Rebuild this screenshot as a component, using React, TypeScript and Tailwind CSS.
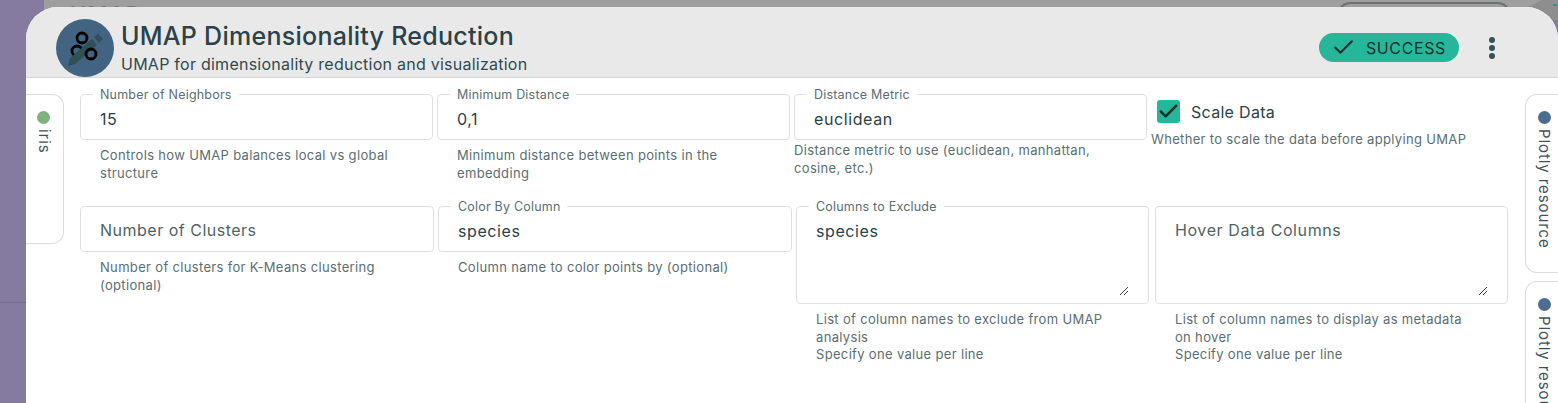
import { Check } from "lucide-react";

const font = "font-['Inter','Noto_Sans',sans-serif]";
const labelClass = "absolute left-[12px] top-[-8px] bg-white px-[7px] text-[12.5px] leading-[15px] tracking-[0.2px] text-[#5b6e72]";

function Field({ label, value, muted, help, className }: { label?: string; value: string; muted?: boolean; help: string; className: string }) {
  return (
    <div className={className}>
      <div className="relative flex h-[46px] items-center rounded-[4px] border border-[#e0e0e0] px-[19px] pt-[4px]">
        {label && <span className={labelClass}>{label}</span>}
        <span className={muted ? "-mt-[2px] text-[16px] tracking-[0.5px] text-[#4f6367]" : "text-[16px] tracking-[0.6px] text-[#2a4248]"}>{value}</span>
      </div>
      <p className="mt-[7px] px-[20px] text-[13px] leading-[17.5px] tracking-[0.33px] text-[#5b6e72]">{help}</p>
    </div>
  );
}

function AreaField({ label, value, muted, help }: { label?: string; value: string; muted?: boolean; help: string[] }) {
  return (
    <div className="w-[353px]">
      <div className="relative h-[98px] rounded-[4px] border border-[#e0e0e0] px-[19px] pt-[12px]">
        {label && <span className={labelClass}>{label}</span>}
        <span className={muted ? "relative -top-[1px] text-[16px] tracking-[0.6px] text-[#4f6367]" : "text-[16px] tracking-[0.6px] text-[#2a4248]"}>{value}</span>
        <svg className="absolute bottom-[7px] right-[19px]" width="10" height="10" viewBox="0 0 10 10" fill="none" stroke="#444" strokeWidth="1">
          <path d="M1 9 9 1M5 9 9 5" />
        </svg>
      </div>
      <div className="mt-[7px] pl-[20px] pr-[30px] text-[13px] leading-[17.5px] tracking-[0.33px] text-[#5b6e72]">
        {help.map((line) => (
          <p key={line}>{line}</p>
        ))}
      </div>
    </div>
  );
}

function SideTab({ label, dot, className, inner }: { label: string; dot: string; className: string; inner: string }) {
  return (
    <div className={className}>
      <div className={inner}>
        <span className="flex items-center gap-[5px] whitespace-nowrap text-[15px] leading-[20px] tracking-[0.9px] text-[#3f5357] [writing-mode:vertical-rl]">
          <span className={dot} />
          {label}
        </span>
      </div>
    </div>
  );
}

export default function App() {
  return (
    <div className={`${font} relative flex h-[403px] w-[1558px] overflow-hidden bg-[#857a9f]`}>
      {/* what shows behind the dialog */}
      <div className="absolute left-[44px] top-0 h-[20px] w-[1514px] bg-[#9e9e9e]">
        <span className="absolute left-[26px] top-[1px] text-[22px] font-semibold leading-[26px] tracking-[1px] text-[#7b7b7b]">UMAP</span>
        <div className="absolute left-[1294px] top-[2px] h-[20px] w-[172px] rounded-t-[12px] border-2 border-[#69726f]" />
        <svg className="absolute right-0 top-0" width="30" height="20" viewBox="0 0 30 20">
          <path d="M0 7 14 0H30V20H0Z" fill="#8e8e8e" />
          <path d="M25 4H30V6H25Z" fill="#2a9a85" />
        </svg>
      </div>
      <div className="absolute left-0 top-[302px] h-px w-[26px] bg-[#766b8f]" />

      <div className="w-[26px] shrink-0" />
      <div className="relative mt-[7px] flex h-[396px] w-[1532px] flex-col overflow-hidden rounded-t-[32px] bg-white">
        <header className="flex h-[71px] shrink-0 items-center border-b border-[#d6d6d6] bg-[#e9e9e9] pl-[30px] pr-[63px] pt-[11px]">
          <div className="flex h-[58px] w-[58px] items-center justify-center rounded-full bg-[#436382]">
            <svg width="58" height="58" viewBox="0 0 58 58" fill="none">
              <circle cx="21" cy="32" r="5" stroke="#000" strokeWidth="2.8" />
              <path d="M12 47 14 39 36 20 41 26 19 45Z" fill="#2f5058" />
              <path d="M38 18 42 14.5 47 20 43 24Z" fill="#2f5058" />
              <circle cx="26" cy="19" r="5" stroke="#000" strokeWidth="2.8" />
              <circle cx="35" cy="35" r="5" stroke="#000" strokeWidth="2.8" />
            </svg>
          </div>
          <div className="ml-[7px] flex-1">
            <h1 className="text-[25px] font-medium leading-[31px] tracking-[0.27px] text-[#2a4248]">UMAP Dimensionality Reduction</h1>
            <p className="mt-[2px] text-[16px] leading-[20px] tracking-[0.25px] text-[#2f4a50]">UMAP for dimensionality reduction and visualization</p>
          </div>
          <div className="flex h-[29px] w-[140px] items-center rounded-full bg-[#26b79b] pl-[12px] text-[#12302b]">
            <Check size={25} strokeWidth={2} />
            <span className="ml-[10px] text-[16px] tracking-[0.6px]">SUCCESS</span>
          </div>
          <div className="ml-[30px] flex flex-col gap-[2px]">
            <span className="h-[6px] w-[6px] rounded-full bg-[#33525a]" />
            <span className="h-[6px] w-[6px] rounded-full bg-[#33525a]" />
            <span className="h-[6px] w-[6px] rounded-full bg-[#33525a]" />
          </div>
        </header>
        <div className="flex flex-1 pt-[16px]">
          <SideTab
            label="iris"
            dot="h-[13px] w-[13px] rounded-full bg-[#7fb27f]"
            className="h-[150px] w-[38px] shrink-0 rounded-r-[12px] border border-l-0 border-[#dcdcdc]"
            inner="flex justify-center pt-[16px] pr-[2px]"
          />
          <div className="ml-[16px] w-[1428px] shrink-0">
            <div className="flex">
              <Field className="w-[353px]" label="Number of Neighbors" value="15" help="Controls how UMAP balances local vs global structure" />
              <Field className="ml-[4px] w-[353px]" label="Minimum Distance" value="0,1" help="Minimum distance between points in the embedding" />
              <div className="ml-[4px] w-[353px]">
                <div className="relative flex h-[46px] items-center rounded-[4px] border border-[#e0e0e0] px-[19px] pt-[4px]">
                  <span className={labelClass}>Distance Metric</span>
                  <span className="text-[16px] tracking-[0.6px] text-[#2a4248]">euclidean</span>
                </div>
                <p className="mt-[1px] pr-[30px] text-[13px] leading-[18px] tracking-[0.33px] text-[#5b6e72]">Distance metric to use (euclidean, manhattan, cosine, etc.)</p>
              </div>
              <div className="ml-[4px] w-[353px]">
                <div className="flex h-[35px] items-center pl-[6px]">
                  <span className="flex h-[23px] w-[23px] items-center justify-center rounded-[3px] bg-[#26b79b]">
                    <Check size={23} strokeWidth={2.6} className="text-[#12302b]" />
                  </span>
                  <span className="ml-[11px] text-[16px] tracking-[0.3px] text-[#2a4248]">Scale Data</span>
                </div>
                <p className="mt-[1px] text-[13px] leading-[18px] tracking-[0.33px] text-[#5b6e72]">Whether to scale the data before applying UMAP</p>
              </div>
            </div>
            <div className="mt-[24px] flex">
              <Field className="w-[354px]" value="Number of Clusters" muted help="Number of clusters for K-Means clustering (optional)" />
              <Field className="ml-[4px] w-[354px]" label="Color By Column" value="species" help="Column name to color points by (optional)" />
              <div className="ml-[4px]">
                <AreaField label="Columns to Exclude" value="species" help={["List of column names to exclude from UMAP analysis", "Specify one value per line"]} />
              </div>
              <div className="ml-[6px]">
                <AreaField value="Hover Data Columns" muted help={["List of column names to display as metadata on hover", "Specify one value per line"]} />
              </div>
            </div>
          </div>
          <div className="ml-[17px] flex flex-col gap-[8px]">
            <SideTab
              label="Plotly resource"
              dot="h-[13px] w-[13px] rounded-full bg-[#4c6d8f]"
              className="h-[179px] w-[40px] rounded-l-[12px] border border-r-0 border-[#dcdcdc]"
              inner="flex justify-center pt-[16px] pr-[3px]"
            />
            <SideTab
              label="Plotly resource"
              dot="h-[13px] w-[13px] rounded-full bg-[#4c6d8f]"
              className="h-[179px] w-[40px] rounded-l-[12px] border border-r-0 border-[#dcdcdc]"
              inner="flex justify-center pt-[16px] pr-[3px]"
            />
          </div>
        </div>
      </div>
    </div>
  );
}
